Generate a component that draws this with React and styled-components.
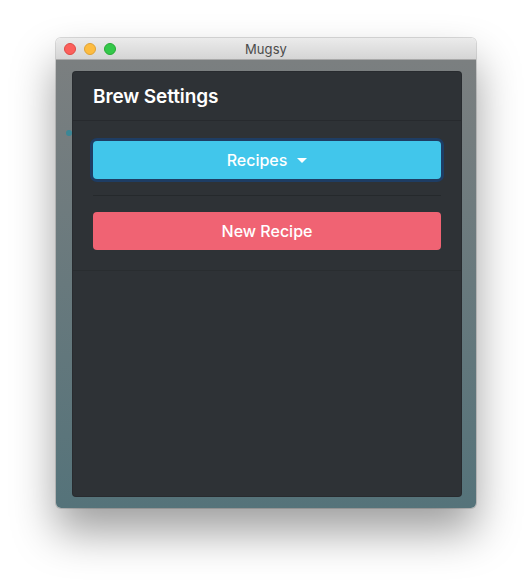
import React from 'react';
import styled, { createGlobalStyle } from 'styled-components';

const GlobalStyle = createGlobalStyle`
  html, body {
    margin: 0;
    background: #ffffff;
    font-family: Inter, "Noto Sans", "Liberation Sans", sans-serif;
  }
`;

const Page = styled.div`
  min-height: 582px;
  box-sizing: border-box;
  padding: 38px 0 0 56px;
`;

// Window chrome

const Window = styled.div`
  width: 420px;
  height: 470px;
  border-radius: 5px;
  overflow: hidden;
  display: flex;
  flex-direction: column;
  box-shadow: 0 24px 44px rgba(0, 0, 0, 0.38), 0 0 0 1px rgba(0, 0, 0, 0.14);
`;

const TitleBar = styled.div`
  height: 22px;
  flex: none;
  display: grid;
  grid-template-columns: 1fr auto 1fr;
  align-items: center;
  background: linear-gradient(#ebebeb, #d5d5d5);
  border-bottom: 1px solid #a9a9a9;
  box-sizing: border-box;
`;

const Lights = styled.div`
  display: flex;
  gap: 8px;
  padding-left: 8px;
`;

const Light = styled.span`
  width: 12px;
  height: 12px;
  border-radius: 50%;
  box-sizing: border-box;
  background: ${(p) => p.color};
  border: 0.5px solid ${(p) => p.edge};
`;

const Title = styled.div`
  font-size: 13px;
  color: #4b4b4b;
  letter-spacing: 0.1px;
`;

const Content = styled.div`
  flex: 1;
  position: relative;
  background: linear-gradient(#7b7f80, #55737a);
  padding: 11px 0 11px 16px;
  display: flex;
`;

const Dot = styled.span`
  position: absolute;
  left: 10px;
  top: 70px;
  width: 6px;
  height: 6px;
  border-radius: 50%;
  background: #3b8796;
`;

// Modal

const Modal = styled.div`
  position: relative;
  width: 390px;
  box-sizing: border-box;
  background: #2e3236;
  border: 1px solid rgba(0, 0, 0, 0.12);
  border-radius: 4px;
  display: flex;
  flex-direction: column;
`;

const ModalHeader = styled.div`
  height: 48px;
  padding: 0 20px;
  display: flex;
  align-items: center;
  border-bottom: 1px solid #272a2e;
`;

const Heading = styled.h1`
  margin: 0;
  font-size: 19px;
  font-weight: 600;
  color: #ffffff;
  letter-spacing: -0.1px;
`;

const ModalBody = styled.div`
  padding: 20px;
  border-bottom: 1px solid #292d30;
`;

const Button = styled.button`
  width: 100%;
  height: 38px;
  border: none;
  border-radius: 4px;
  display: flex;
  align-items: center;
  justify-content: center;
  font-family: inherit;
  font-size: 16px;
  font-weight: 500;
  color: #ffffff;
  background: ${(p) => (p.variant === 'danger' ? '#f06373' : '#41c6eb')};
  box-shadow: ${(p) => (p.focused ? '0 0 0 3px #1e3d64' : 'none')};
`;

const Caret = styled.span`
  margin-left: 10px;
  border-top: 5px solid #ffffff;
  border-left: 5px solid transparent;
  border-right: 5px solid transparent;
`;

const Divider = styled.hr`
  margin: 16px 0;
  border: none;
  border-top: 1px solid #25292c;
`;

function App() {
  return (
    <Page>
      <GlobalStyle />
      <Window>
        <TitleBar>
          <Lights>
            <Light color="#fc605c" edge="#de4a44" />
            <Light color="#fdbc40" edge="#dea236" />
            <Light color="#34c84a" edge="#27aa35" />
          </Lights>
          <Title>Mugsy</Title>
          <div />
        </TitleBar>
        <Content>
          <Dot />
          <Modal>
            <ModalHeader>
              <Heading>Brew Settings</Heading>
            </ModalHeader>
            <ModalBody>
              <Button focused>
                Recipes
                <Caret />
              </Button>
              <Divider />
              <Button variant="danger">New Recipe</Button>
            </ModalBody>
          </Modal>
        </Content>
      </Window>
    </Page>
  );
}

export default App;
